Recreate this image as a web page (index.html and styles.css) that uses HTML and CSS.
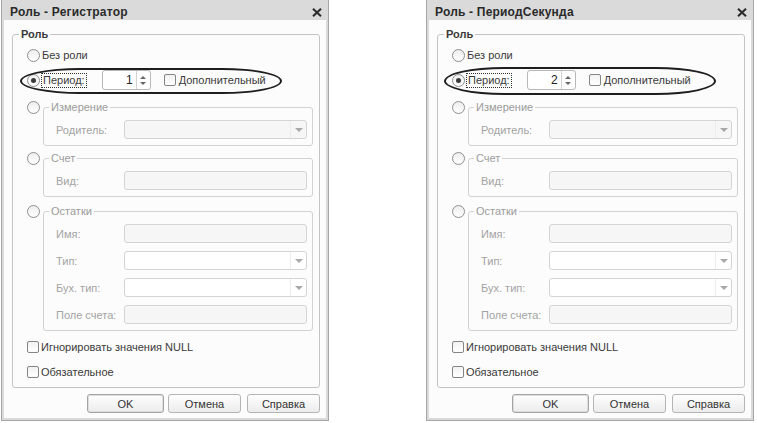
FILE: index.html
```html
<!DOCTYPE html>
<html lang="ru">
<head>
<meta charset="utf-8">
<title>Роль</title>
<link rel="stylesheet" href="styles.css">
</head>
<body>
<div class="page">

  <div class="dialog">
    <div class="titlebar">
      <span class="title">Роль - Регистратор</span>
      <svg class="close" width="10" height="9" viewBox="0 0 10 9"><path d="M1 0.8 L9 8.2 M9 0.8 L1 8.2" stroke="#2b2b2b" stroke-width="2.1" fill="none"/></svg>
    </div>
    <div class="body">
      <fieldset class="group">
        <legend class="group-title">Роль</legend>
        <div class="row row-first"><span class="radio"></span><span class="text">Без роли</span></div>
        <div class="row row-period">
          <span class="radio checked"></span>
          <span class="text focus">Период:</span>
          <span class="spin"><span class="spin-val">1</span><span class="spin-btn"><span class="up"></span><span class="down"></span></span></span>
          <span class="check check-extra"></span><span class="text">Дополнительный</span>
          <span class="ellipse ellipse-a"></span>
        </div>
        <div class="opt opt-dim">
          <span class="radio"></span>
          <fieldset class="sub">
            <legend class="sub-title">Измерение</legend>
            <div class="field"><span class="flabel">Родитель:</span><span class="input disabled combo"><span class="arrow"></span></span></div>
          </fieldset>
        </div>
        <div class="opt opt-acc">
          <span class="radio"></span>
          <fieldset class="sub">
            <legend class="sub-title">Счет</legend>
            <div class="field"><span class="flabel">Вид:</span><span class="input disabled"></span></div>
          </fieldset>
        </div>
        <div class="opt opt-bal">
          <span class="radio"></span>
          <fieldset class="sub sub-wide">
            <legend class="sub-title">Остатки</legend>
            <div class="field"><span class="flabel">Имя:</span><span class="input disabled"></span></div>
            <div class="field"><span class="flabel">Тип:</span><span class="input combo"><span class="arrow"></span></span></div>
            <div class="field"><span class="flabel">Бух. тип:</span><span class="input combo"><span class="arrow"></span></span></div>
            <div class="field"><span class="flabel">Поле счета:</span><span class="input disabled"></span></div>
          </fieldset>
        </div>
        <div class="row row-null"><span class="check"></span><span class="text">Игнорировать значения NULL</span></div>
        <div class="row row-req"><span class="check"></span><span class="text">Обязательное</span></div>
      </fieldset>
      <div class="buttons">
        <span class="btn btn-ok">OK</span>
        <span class="btn btn-cancel">Отмена</span>
        <span class="btn btn-help">Справка</span>
      </div>
    </div>
  </div>

  <div class="dialog">
    <div class="titlebar">
      <span class="title">Роль - ПериодСекунда</span>
      <svg class="close" width="10" height="9" viewBox="0 0 10 9"><path d="M1 0.8 L9 8.2 M9 0.8 L1 8.2" stroke="#2b2b2b" stroke-width="2.1" fill="none"/></svg>
    </div>
    <div class="body">
      <fieldset class="group">
        <legend class="group-title">Роль</legend>
        <div class="row row-first"><span class="radio"></span><span class="text">Без роли</span></div>
        <div class="row row-period">
          <span class="radio checked"></span>
          <span class="text focus">Период:</span>
          <span class="spin"><span class="spin-val">2</span><span class="spin-btn"><span class="up"></span><span class="down"></span></span></span>
          <span class="check check-extra"></span><span class="text">Дополнительный</span>
          <span class="ellipse ellipse-b"></span>
        </div>
        <div class="opt opt-dim">
          <span class="radio"></span>
          <fieldset class="sub">
            <legend class="sub-title">Измерение</legend>
            <div class="field"><span class="flabel">Родитель:</span><span class="input disabled combo"><span class="arrow"></span></span></div>
          </fieldset>
        </div>
        <div class="opt opt-acc">
          <span class="radio"></span>
          <fieldset class="sub">
            <legend class="sub-title">Счет</legend>
            <div class="field"><span class="flabel">Вид:</span><span class="input disabled"></span></div>
          </fieldset>
        </div>
        <div class="opt opt-bal">
          <span class="radio"></span>
          <fieldset class="sub sub-wide">
            <legend class="sub-title">Остатки</legend>
            <div class="field"><span class="flabel">Имя:</span><span class="input disabled"></span></div>
            <div class="field"><span class="flabel">Тип:</span><span class="input combo"><span class="arrow"></span></span></div>
            <div class="field"><span class="flabel">Бух. тип:</span><span class="input combo"><span class="arrow"></span></span></div>
            <div class="field"><span class="flabel">Поле счета:</span><span class="input disabled"></span></div>
          </fieldset>
        </div>
        <div class="row row-null"><span class="check"></span><span class="text">Игнорировать значения NULL</span></div>
        <div class="row row-req"><span class="check"></span><span class="text">Обязательное</span></div>
      </fieldset>
      <div class="buttons">
        <span class="btn btn-ok">OK</span>
        <span class="btn btn-cancel">Отмена</span>
        <span class="btn btn-help">Справка</span>
      </div>
    </div>
  </div>

</div>
</body>
</html>
```

FILE: styles.css
```css
html, body {
  margin: 0;
  padding: 0;
  background: #ffffff;
}
body {
  font-family: "Liberation Sans", Arial, sans-serif;
  font-size: 11px;
  color: #3a3a3a;
}
.page {
  display: flex;
  gap: 97px;
  padding-left: 1px;
}
.dialog {
  width: 328px;
  box-sizing: border-box;
  border: 1px solid #a6a6a6;
  border-top: none;
  background: #dadada;
  padding: 0 2px 2px;
  display: flex;
  flex-direction: column;
}
.titlebar {
  height: 20px;
  display: flex;
  align-items: center;
  justify-content: space-between;
  padding: 3px 4px 0 6px;
  box-sizing: border-box;
}
.title {
  font-size: 12px;
  font-weight: bold;
  color: #2a2a2a;
  letter-spacing: 0.2px;
}
.close {
  display: block;
  margin-top: 1px;
}
.body {
  background: #fcfcfc;
  padding: 8px 0 5px;
  display: flex;
  flex-direction: column;
}
fieldset {
  margin: 0;
  min-width: 0;
}
.group {
  margin: 0 6px 0 8px;
  border: 1px solid #c4c4c4;
  border-radius: 3px;
  padding: 6px 6px 7px 6px;
  position: relative;
}
.group-title {
  padding: 0 2px;
  font-weight: bold;
  line-height: 13px;
  color: #3a3a3a;
}
.row {
  display: flex;
  align-items: center;
  margin-left: 8px;
  height: 16px;
}
.row-period {
  height: 20px;
  margin-top: 7px;
  position: relative;
}
.row-null { margin-top: 8px; }
.row-req { margin-top: 9px; }
.text {
  margin-left: 2px;
  white-space: nowrap;
  line-height: 13px;
}
.focus {
  border: 1px dotted #333;
  padding: 0 1px;
  margin-left: 1px;
}
.radio {
  width: 13px;
  height: 13px;
  box-sizing: border-box;
  border: 1px solid #8e8e8e;
  border-radius: 50%;
  background: linear-gradient(#eeeeee, #ffffff);
  flex: none;
  position: relative;
}
.radio.checked::after {
  content: "";
  position: absolute;
  left: 3px;
  top: 3px;
  width: 5px;
  height: 5px;
  border-radius: 50%;
  background: #3a3a3a;
}
.check {
  width: 12px;
  height: 12px;
  box-sizing: border-box;
  border: 1px solid #858585;
  border-radius: 2px;
  background: linear-gradient(#f2f2f2, #ffffff);
  flex: none;
}
.check-extra { margin-left: 13px; margin-right: 1px; }
.spin {
  margin-left: 15px;
  width: 49px;
  height: 20px;
  box-sizing: border-box;
  border: 1px solid #b8b8b8;
  border-radius: 3px;
  background: #fff;
  display: flex;
  flex: none;
}
.spin-val {
  flex: 1;
  text-align: right;
  padding-right: 3px;
  line-height: 18px;
  font-size: 12px;
  color: #222;
}
.spin-btn {
  width: 13px;
  border-left: 1px solid #d2d2d2;
  display: flex;
  flex-direction: column;
  align-items: center;
  justify-content: center;
  gap: 3px;
}
.up {
  width: 0; height: 0;
  border-left: 3px solid transparent;
  border-right: 3px solid transparent;
  border-bottom: 3px solid #666;
}
.down {
  width: 0; height: 0;
  border-left: 3px solid transparent;
  border-right: 3px solid transparent;
  border-top: 3px solid #666;
}
.ellipse {
  position: absolute;
  border: 2px solid #1e1e1e;
  border-radius: 60px / 50%;
  box-sizing: border-box;
  pointer-events: none;
}
.ellipse-a { left: -7px; top: -2px; width: 262px; height: 26px; }
.ellipse-b { left: -8px; top: -3px; width: 272px; height: 28px; }

.opt {
  display: flex;
  align-items: flex-start;
  margin-left: 8px;
}
.opt > .radio { margin-top: 0; margin-right: 3px; }
.opt-dim { margin-top: 11px; }
.opt-acc { margin-top: 6px; }
.opt-bal { margin-top: 8px; }
.sub {
  flex: 1;
  border: 1px solid #d2d2d2;
  border-radius: 3px;
  padding: 6px 5px 6px 5px;
  display: flex;
  flex-direction: column;
  gap: 8px;
}
.sub-title {
  padding: 0 2px;
  line-height: 13px;
  color: #9b9b9b;
}
.field {
  display: flex;
  align-items: center;
  height: 19px;
}
.flabel {
  width: 68px;
  padding-left: 7px;
  color: #a3a3a3;
  white-space: nowrap;
  flex: none;
}
.input {
  flex: 1;
  height: 19px;
  box-sizing: border-box;
  border: 1px solid #d4d4d4;
  border-radius: 3px;
  background: #ffffff;
  display: flex;
  justify-content: flex-end;
}
.input.disabled { background: #f6f6f6; }
.arrow {
  width: 15px;
  border-left: 1px solid #ececec;
  display: flex;
  align-items: center;
  justify-content: center;
}
.arrow::after {
  content: "";
  width: 0; height: 0;
  border-left: 4px solid transparent;
  border-right: 4px solid transparent;
  border-top: 4px solid #a8a8a8;
}
.buttons {
  display: flex;
  justify-content: flex-end;
  margin-top: 6px;
  padding-right: 6px;
}
.btn {
  height: 19px;
  box-sizing: border-box;
  border: 1px solid #b4b4b4;
  border-radius: 3px;
  background: linear-gradient(#fefefe, #ececec);
  display: flex;
  align-items: center;
  justify-content: center;
  color: #333;
}
.btn-ok { width: 77px; border-color: #a3a3a3; box-shadow: inset 0 0 0 1px #dedede; }
.btn-cancel { width: 73px; margin-left: 4px; }
.btn-help { width: 73px; margin-left: 6px; }
```
